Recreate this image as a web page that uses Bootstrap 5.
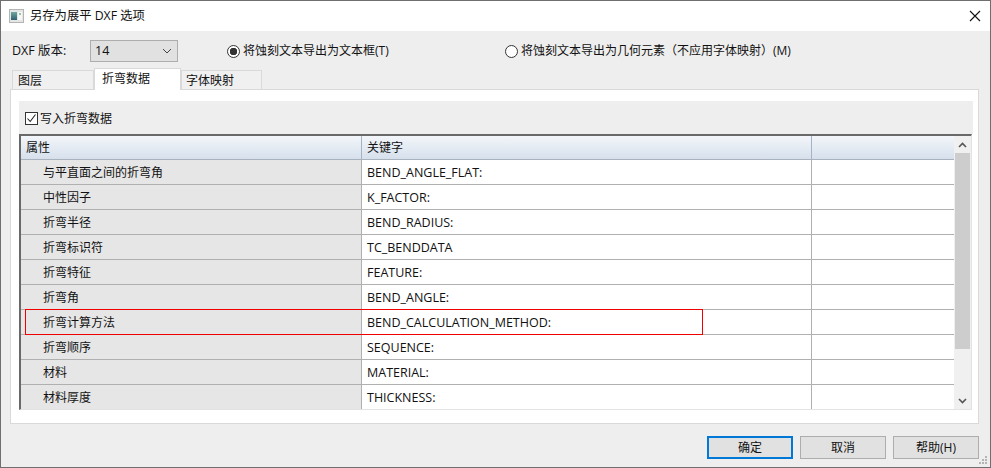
<!DOCTYPE html>
<html lang="zh-CN">
  <head>
    <meta charset="UTF-8">
    <meta name="viewport" content="width=device-width, initial-scale=1.0">
    <title>另存为展平 DXF 选项</title>
    <link rel="stylesheet" href="https://cdn.jsdelivr.net/npm/bootstrap@5.3.0/dist/css/bootstrap.min.css">
    <style>
      html, body { height: 100%; }
      body { font-family: "Open Sans", "Noto Sans CJK SC", sans-serif; font-size: 12px; color: #111; background: #f0f0f0; overflow: hidden; }
      .win { width: 991px; height: 468px; border: 1px solid #6f6f6f; background: #eeeeee; }
      .win-title { height: 30px; background: #fff; padding: 0 8px; font-size: 12.3px; }
      .win-icon { margin-right: 6px; }
      .win-x { width: 14px; height: 14px; }
      .win-body { padding: 0 11px 0 9px; }
      .opt-row { height: 22px; margin-top: 9px; padding-left: 2px; }
      .ver-label { width: 55px; font-size: 12.5px; }
      .ver-select { width: 88px; height: 22px; margin-left: 23px; border: 1px solid #adadad; background: #e1e1e1; padding: 0 5px 0 4px; font-size: 12.5px; }
      .radio-dot { width: 13px; height: 13px; border: 1px solid #333; border-radius: 50%; background: #fff; flex: none; margin-right: 3px; }
      .radio-on { background: radial-gradient(circle, #333 0 3.5px, #fff 4px); }
      .opt-a { margin-left: 49px; width: 278px; }
      .tab-strip { height: 21px; padding-left: 2px; align-items: flex-end; margin-top: 6px; position: relative; z-index: 1; border: 0; }
      .tab-strip .nav-link { height: 19px; width: 82px; padding: 1px 0 0 5px; border: 1px solid #d9d9d9; border-bottom: 0; border-radius: 0; color: #111; background: #f0f0f0; font-size: 12px; }
      .tab-strip .nav-link.active { height: 22px; width: 87px; padding: 1px 0 0 7px; background: #fff; color: #111; border-color: #d9d9d9; margin-bottom: -1px; }
      .tab-strip .tab-last { width: 81px; padding-left: 4px; }
      .tab-page { height: 335px; width: 969px; border: 1px solid #d9d9d9; background: #fff; padding: 11px 5px 0 8px; }
      .chk-band { height: 33px; background: #eeeeee; padding: 2px 0 0 6px; }
      .chk-box { width: 13px; height: 13px; border: 1px solid #333; background: #fff; margin-right: 2px; flex: none; }
      .grid-wrap { width: 953px; height: 276px; border-top: 2px solid #696969; border-left: 2px solid #696969; border-bottom: 1px solid #e3e3e3; border-right: 1px solid #e3e3e3; background: #fff; }
      .grid-main { width: 933px; overflow: hidden; position: relative; }
      .prop-table { table-layout: fixed; width: 933px; margin: 0; border-collapse: separate; border-spacing: 0; }
      .prop-table th, .prop-table td { height: 25px; padding: 2px 0 0 5px; font-weight: 400; font-size: 12.5px; border: 0; border-right: 1px solid #b0b0b0; border-bottom: 1px solid #b0b0b0; color: #111; vertical-align: middle; background: #fff; box-shadow: none; }
      .prop-table th { height: 24px; padding-top: 1px; font-size: 12px; background: linear-gradient(#f3f6fa, #d6e0ec); border-right-color: #a4b4c4; border-bottom-color: #a9b2bd; }
      .prop-table td.prop-name { background: #e6e6e6; padding-left: 22px; font-size: 12px; }
      .prop-table th:last-child, .prop-table td:last-child { border-right: 0; }
      .red-mark { position: absolute; left: 4px; top: 173px; width: 678px; height: 26px; border: 1px solid #f00000; pointer-events: none; z-index: 2; }
      .scroll-track { width: 17px; background: #f0f0f0; }
      .scroll-btn { height: 17px; }
      .scroll-thumb { height: 196px; margin: 0 1px; background: #cdcdcd; }
      .foot-row { padding-top: 12px; width: 969px; gap: 7px; }
      .dlg-btn { width: 86px; height: 23px; padding: 0; border: 1px solid #adadad; border-radius: 0; background: #e1e1e1; color: #111; font-size: 12px; line-height: 1; }
      .dlg-btn.is-default { border: 2px solid #0078d7; }
      .grip { position: absolute; right: 2px; bottom: 2px; width: 9px; height: 9px; }
    </style>
  </head>
  <body>
    <div class="win position-relative d-flex flex-column">
      <!-- タイトルバー -->
      <div class="win-title d-flex align-items-center">
        <svg class="win-icon" width="15" height="14" viewBox="0 0 15 14">
          <defs><linearGradient id="ic" x1="0" y1="0" x2="0" y2="1"><stop offset="0" stop-color="#6fa8a0"/><stop offset="1" stop-color="#2f5f70"/></linearGradient></defs>
          <rect x="0.5" y="0.5" width="14" height="13" fill="#e4e6e6" stroke="#b4b4b4"/>
          <rect x="2" y="3" width="6" height="8" fill="url(#ic)"/>
          <rect x="9" y="3" width="4" height="8" fill="#f7f7f7"/>
          <rect x="10" y="4" width="2" height="2" fill="#9fc0a8"/>
        </svg>
        <span class="flex-grow-1">另存为展平 DXF 选项</span>
        <svg class="win-x" viewBox="0 0 14 14"><path d="M2 2 L12 12 M12 2 L2 12" stroke="#111" stroke-width="1.1" fill="none"/></svg>
      </div>
      <div class="win-body">
        <div class="opt-row d-flex align-items-center">
          <span class="ver-label">DXF 版本:</span>
          <div class="ver-select d-flex align-items-center justify-content-between">
            <span>14</span>
            <svg width="10" height="6" viewBox="0 0 10 6"><path d="M1 1 L5 5 L9 1" stroke="#444" fill="none"/></svg>
          </div>
          <div class="opt-a d-flex align-items-center"><span class="radio-dot radio-on"></span>将蚀刻文本导出为文本框(T)</div>
          <div class="d-flex align-items-center"><span class="radio-dot"></span>将蚀刻文本导出为几何元素（不应用字体映射）(M)</div>
        </div>
        <ul class="nav tab-strip d-flex">
          <li class="nav-item"><a class="nav-link" href="#">图层</a></li>
          <li class="nav-item"><a class="nav-link active" href="#">折弯数据</a></li>
          <li class="nav-item"><a class="nav-link tab-last" href="#">字体映射</a></li>
        </ul>
        <div class="tab-page">
          <div class="chk-band d-flex align-items-center">
            <span class="chk-box d-flex align-items-center justify-content-center">
              <svg width="11" height="11" viewBox="0 0 11 11"><path d="M1.5 5.5 L4.2 8.5 L9.5 1.5" stroke="#222" stroke-width="1.1" fill="none"/></svg>
            </span>
            写入折弯数据
          </div>
          <div class="grid-wrap d-flex">
            <div class="grid-main">
              <table class="table prop-table">
                <colgroup><col style="width:341px"><col style="width:450px"><col></colgroup>
                <thead><tr><th>属性</th><th>关键字</th><th></th></tr></thead>
                <tbody id="rows"></tbody>
              </table>
              <div class="red-mark"></div>
            </div>
            <div class="scroll-track d-flex flex-column ms-auto">
              <div class="scroll-btn d-flex align-items-center justify-content-center">
                <svg width="9" height="6" viewBox="0 0 9 6"><path d="M1 5 L4.5 1.5 L8 5" stroke="#555" stroke-width="1.6" fill="none"/></svg>
              </div>
              <div class="scroll-thumb"></div>
              <div class="flex-grow-1"></div>
              <div class="scroll-btn d-flex align-items-center justify-content-center">
                <svg width="9" height="6" viewBox="0 0 9 6"><path d="M1 1 L4.5 4.5 L8 1" stroke="#555" stroke-width="1.6" fill="none"/></svg>
              </div>
            </div>
          </div>
        </div>
        <div class="foot-row d-flex justify-content-end">
          <button class="btn dlg-btn is-default">确定</button>
          <button class="btn dlg-btn">取消</button>
          <button class="btn dlg-btn">帮助(H)</button>
        </div>
      </div>
      <svg class="grip" viewBox="0 0 9 9" fill="#b4b4b4">
        <rect x="6" y="0" width="2" height="2"/><rect x="3" y="3" width="2" height="2"/><rect x="6" y="3" width="2" height="2"/>
        <rect x="0" y="6" width="2" height="2"/><rect x="3" y="6" width="2" height="2"/><rect x="6" y="6" width="2" height="2"/>
      </svg>
    </div>
    <script>
      // 折弯数据の行
      const rows = [
        ['与平直面之间的折弯角', 'BEND_ANGLE_FLAT:'],
        ['中性因子', 'K_FACTOR:'],
        ['折弯半径', 'BEND_RADIUS:'],
        ['折弯标识符', 'TC_BENDDATA'],
        ['折弯特征', 'FEATURE:'],
        ['折弯角', 'BEND_ANGLE:'],
        ['折弯计算方法', 'BEND_CALCULATION_METHOD:'],
        ['折弯顺序', 'SEQUENCE:'],
        ['材料', 'MATERIAL:'],
        ['材料厚度', 'THICKNESS:'],
      ];
      document.getElementById('rows').innerHTML = rows.map(r =>
        `<tr><td class="prop-name">${r[0]}</td><td>${r[1]}</td><td></td></tr>`).join('');
    </script>
    <script src="https://cdn.jsdelivr.net/npm/bootstrap@5.3.0/dist/js/bootstrap.bundle.min.js"></script>
  </body>
</html>
